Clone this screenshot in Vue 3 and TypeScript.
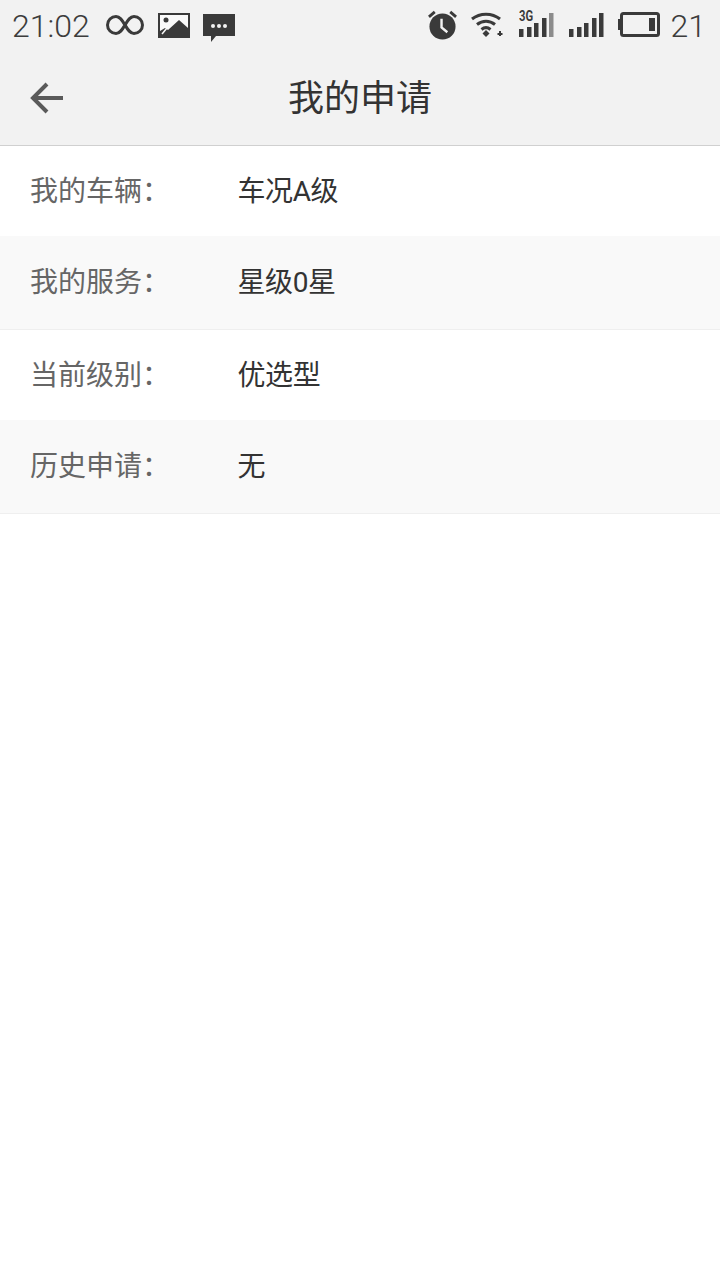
<template>
  <div class="page">
    <header class="top">
      <div class="status">
        <div class="status-side">
          <span class="clock">21:02</span>
          <svg class="ic inf" width="38" height="20" viewBox="0 0 38 20">
            <path d="M19 10C16 5 14 1.500 10 1.500a8.500 8.500 0 0 0 0 17c4 0 6-3.500 9-8.500s5-8.500 9-8.500a8.500 8.500 0 0 1 0 17c-4 0-6-3.500-9-8.500z" fill="none" stroke="#3a3a3a" stroke-width="3" />
          </svg>
          <svg class="ic pic" width="32" height="25" viewBox="0 0 32 25">
            <path fill="#3a3a3a" d="M0 0h32v25H0z" />
            <path fill="#fafafa" d="M2 2h28v21H2z" />
            <circle cx="8" cy="7" r="2.500" fill="#3a3a3a" />
            <path fill="#3a3a3a" d="M2 23v-5l5-3 3 2 11-10 9 8v8z" />
            <path d="M4 21l5-6" stroke="#fafafa" stroke-width="1.500" />
          </svg>
          <svg class="ic msg" width="32" height="28" viewBox="0 0 32 28">
            <path fill="#3a3a3a" d="M0 0h32v22H13l-5 6v-6H0z" />
            <circle cx="10" cy="12" r="2" fill="#f2f2f2" />
            <circle cx="16" cy="12" r="2" fill="#f2f2f2" />
            <circle cx="22" cy="12" r="2" fill="#f2f2f2" />
          </svg>
        </div>
        <div class="status-side">
          <svg class="ic alarm" width="31" height="30" viewBox="0 0 32 31">
            <circle cx="16" cy="17" r="13.500" fill="#3a3a3a" />
            <path d="M15 9v9l6 5" fill="none" stroke="#f2f2f2" stroke-width="2.500" />
            <path d="M2 7l6-5M30 7l-6-5" stroke="#3a3a3a" stroke-width="3" />
          </svg>
          <svg class="ic wifi" width="33" height="25" viewBox="0 0 33 25">
            <path d="M1 7c8-6.500 20-6.500 28 0M6 12.500c5.500-4.500 12.500-4.500 18 0M10.500 17.500c3-2.500 6-2.500 9 0" fill="none" stroke="#3a3a3a" stroke-width="3" />
            <path d="M11.500 21.500L15 18l3.500 3.500L15 25z" fill="#3a3a3a" />
            <path d="M29 19v5M26.500 22h5" stroke="#3a3a3a" stroke-width="2" />
          </svg>
          <div class="sig-3g">
            <span class="tag">3G</span>
            <svg width="35" height="25" viewBox="0 0 35 25">
              <path fill="#3a3a3a" d="M0 17h4.500v8H0zM8 15h4.500v10H8zM15 11h4.500v14H15zM23 6h4.500v19H23z" />
              <path fill="#8c8c8c" d="M30 1h4.500v24H30z" />
            </svg>
          </div>
          <svg class="ic sig" width="35" height="25" viewBox="0 0 35 25">
            <path fill="#3a3a3a" d="M0 17h4.500v8H0zM8 15h4.500v10H8zM15 11h4.500v14H15zM23 6h4.500v19H23zM30 1h4.500v24H30z" />
          </svg>
          <svg class="ic bat" width="42" height="25" viewBox="0 0 42 25">
            <rect x="3.500" y="1.500" width="37" height="22" rx="2" fill="none" stroke="#3a3a3a" stroke-width="3" />
            <path fill="#3a3a3a" d="M0 7h2v11H0zM31 6h6v13h-6z" />
          </svg>
          <span class="clock batt-num">21</span>
        </div>
      </div>
      <div class="nav">
        <svg class="back" width="36" height="34" viewBox="0 0 36 34">
          <path d="M34 17H5M18 3L4 17l14 14" fill="none" stroke="#5a5a5a" stroke-width="4" />
        </svg>
        <h1 class="title">我的申请</h1>
      </div>
    </header>

    <ul class="list">
      <li v-for="(it, i) in rows" :key="it.label" class="row" :class="{ alt: i % 2 === 1 }">
        <span class="label">{{ it.label }}：</span>
        <span class="val">{{ it.value }}</span>
      </li>
    </ul>
  </div>
</template>

<script setup lang="ts">
const rows: { label: string; value: string }[] = [
  { label: '我的车辆', value: '车况A级' },
  { label: '我的服务', value: '星级0星' },
  { label: '当前级别', value: '优选型' },
  { label: '历史申请', value: '无' },
]
</script>

<style scoped>
.page { width: 720px; height: 1280px; background: #fff; font-family: "Roboto", "Noto Sans CJK SC", sans-serif; overflow: hidden; }
.top { height: 146px; background: #f2f2f2; border-bottom: 1px solid #d0d0d0; box-sizing: border-box; }
.status { height: 52px; display: flex; justify-content: space-between; align-items: center; padding: 0 14px 0 12px; }
.status-side { display: flex; align-items: center; }
.clock { font-size: 32px; font-weight: 300; color: #3c3c3c; line-height: 1; }
.ic { display: block; flex: none; }
.inf { margin-left: 16px; margin-bottom: 2px; }
.pic { margin-left: 14px; margin-bottom: 2px; }
.msg { margin-left: 13px; margin-top: 3px; }
.alarm { margin-bottom: 3px; }
.wifi { margin-left: 13px; margin-bottom: 3px; }
.sig-3g { position: relative; margin-left: 15px; width: 35px; height: 25px; margin-bottom: 3px; }
.sig-3g svg { display: block; }
.tag { position: absolute; left: 0; top: -2px; font-size: 15px; line-height: 12px; font-weight: 700; color: #3a3a3a; transform: scaleX(.75); transform-origin: left top; }
.sig { margin-left: 15px; margin-bottom: 3px; }
.bat { margin-left: 14px; margin-bottom: 3px; }
.batt-num { margin-left: 11px; }
.nav { position: relative; height: 93px; display: flex; align-items: center; justify-content: center; }
.back { position: absolute; left: 29px; top: 29px; }
.title { margin: 0; font-size: 36px; font-weight: 400; line-height: 1; color: #333; }
.list { margin: 0; padding: 0; list-style: none; }
.row { height: 90px; display: flex; align-items: center; padding: 0 0 5px 30px; background: #fff; font-size: 28px; box-sizing: border-box; }
.row.alt { height: 94px; background: #f9f9f9; border-bottom: 1px solid #efefef; }
.label { width: 207.500px; color: #666; }
.val { color: #333; letter-spacing: -.4px; }
</style>
